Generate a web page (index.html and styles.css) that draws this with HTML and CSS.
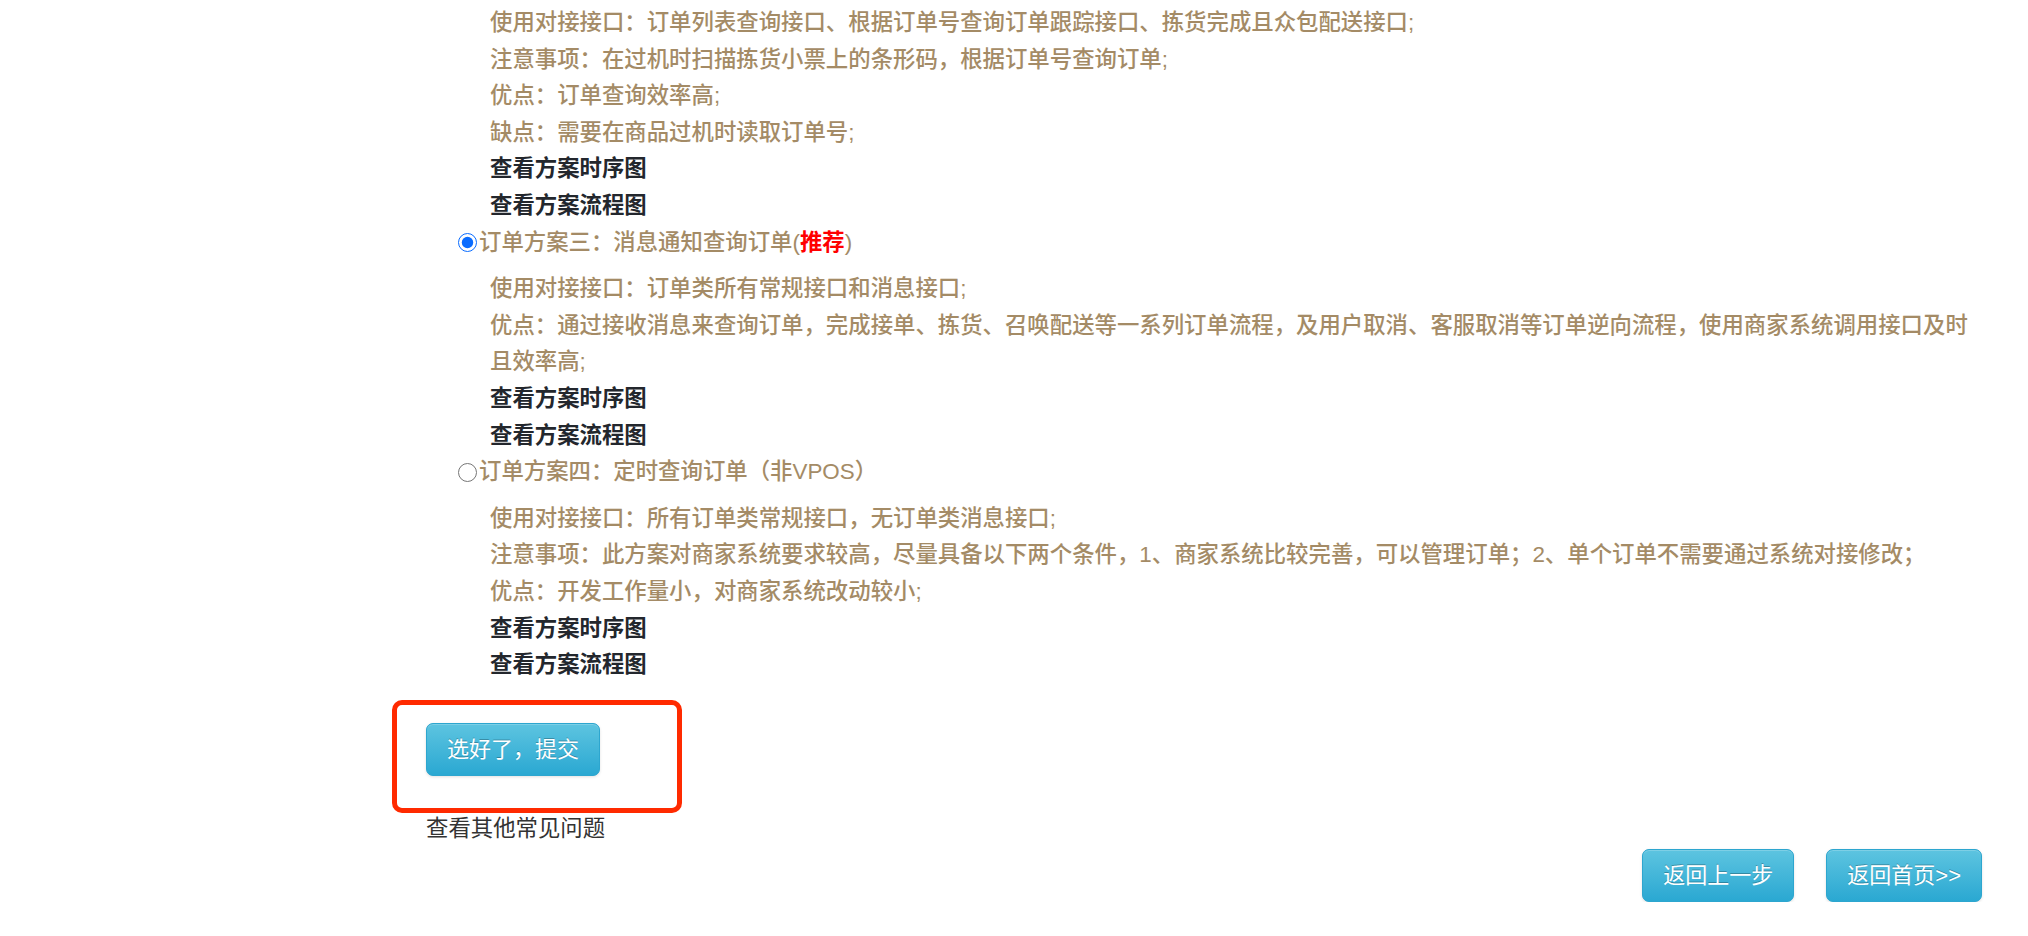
FILE: index.html
```html
<!DOCTYPE html>
<html lang="zh-CN">
<head>
    <meta charset="UTF-8">
    <meta name="viewport" content="width=device-width, initial-scale=1.0">
    <title>订单对接方案选择</title>
    <link rel="stylesheet" href="styles.css">
</head>
<body>
    <div class="page">
        <form id="planForm">
            <div class="plan">
                <div class="plan-desc">
                    <p>使用对接接口：订单列表查询接口、根据订单号查询订单跟踪接口、拣货完成且众包配送接口;</p>
                    <p>注意事项：在过机时扫描拣货小票上的条形码，根据订单号查询订单;</p>
                    <p>优点：订单查询效率高;</p>
                    <p>缺点：需要在商品过机时读取订单号;</p>
                    <a href="#" class="plan-link">查看方案时序图</a>
                    <a href="#" class="plan-link">查看方案流程图</a>
                </div>
            </div>

            <div class="plan">
                <label class="plan-title">
                    <input type="radio" name="plan" value="3" checked>订单方案三：消息通知查询订单(<b class="hot">推荐</b>)
                </label>
                <div class="plan-desc">
                    <p>使用对接接口：订单类所有常规接口和消息接口;</p>
                    <p>优点：通过接收消息来查询订单，完成接单、拣货、召唤配送等一系列订单流程，及用户取消、客服取消等订单逆向流程，使用商家系统调用接口及时且效率高;</p>
                    <a href="#" class="plan-link">查看方案时序图</a>
                    <a href="#" class="plan-link">查看方案流程图</a>
                </div>
            </div>

            <div class="plan">
                <label class="plan-title">
                    <input type="radio" name="plan" value="4">订单方案四：定时查询订单（非VPOS）
                </label>
                <div class="plan-desc">
                    <p>使用对接接口：所有订单类常规接口，无订单类消息接口;</p>
                    <p>注意事项：此方案对商家系统要求较高，尽量具备以下两个条件，1、商家系统比较完善，可以管理订单；2、单个订单不需要通过系统对接修改；</p>
                    <p>优点：开发工作量小，对商家系统改动较小;</p>
                    <a href="#" class="plan-link">查看方案时序图</a>
                    <a href="#" class="plan-link">查看方案流程图</a>
                </div>
            </div>

            <div class="submit-block">
                <span class="mark"></span>
                <button type="button" class="btn">选好了，提交</button>
            </div>
        </form>

        <a href="#" class="faq-link">查看其他常见问题</a>

        <div class="nav-buttons">
            <button type="button" class="btn">返回上一步</button>
            <button type="button" class="btn">返回首页&gt;&gt;</button>
        </div>
    </div>
</body>
</html>
```

FILE: styles.css
```css
body {
    margin: 0;
    padding: 0;
    background: #fff;
    font-family: "Liberation Sans", "Noto Sans CJK SC", sans-serif;
    font-size: 22.4px;
    line-height: 36.6px;
    color: #333;
}

.page {
    width: 1556px;
    margin-left: 426px;
    padding-top: 5px;
}

.plan-title {
    display: flex;
    align-items: center;
    margin-left: 32px;
    color: #a48b66;
    font-weight: 500;
    cursor: pointer;
}

.plan-title input {
    width: 19px;
    height: 19px;
    margin: 0 2px 0 0;
    accent-color: #0a6cff;
}

.hot {
    color: #ff0000;
    font-weight: bold;
}

.plan-desc {
    margin-left: 64px;
    color: #a48b66;
    font-weight: 500;
}

.plan-title + .plan-desc {
    margin-top: 10px;
}

.plan-desc p {
    margin: 0;
}

.plan-link {
    display: block;
    color: #23272d;
    font-weight: bold;
    text-decoration: none;
}

.submit-block {
    position: relative;
    margin-top: 39px;
}

.mark {
    position: absolute;
    left: -34px;
    top: -23px;
    width: 290px;
    height: 113px;
    box-sizing: border-box;
    border: 5px solid #ff2a00;
    border-radius: 10px;
    pointer-events: none;
}

.btn {
    height: 53px;
    padding: 0 20px;
    font-family: "Liberation Sans", "Noto Sans CJK SC", sans-serif;
    font-size: 22px;
    line-height: 51px;
    color: #fff;
    text-shadow: 0 -1px 0 rgba(0, 0, 0, 0.25);
    background-color: #41b7dc;
    background-image: linear-gradient(to bottom, #5dc4e0, #2aa8d2);
    border: 1px solid #2da6cf;
    border-radius: 7px;
    box-shadow: inset 0 1px 0 rgba(255, 255, 255, 0.2), 0 1px 3px rgba(0, 0, 0, 0.12);
    cursor: pointer;
}

    .btn:hover {
        background-image: linear-gradient(to bottom, #4fbbdb, #2399c2);
    }

.faq-link {
    display: block;
    margin-top: 35px;
    color: #333;
    text-decoration: none;
}

.nav-buttons {
    display: flex;
    justify-content: flex-end;
    gap: 32px;
    margin-top: 2px;
}
```
